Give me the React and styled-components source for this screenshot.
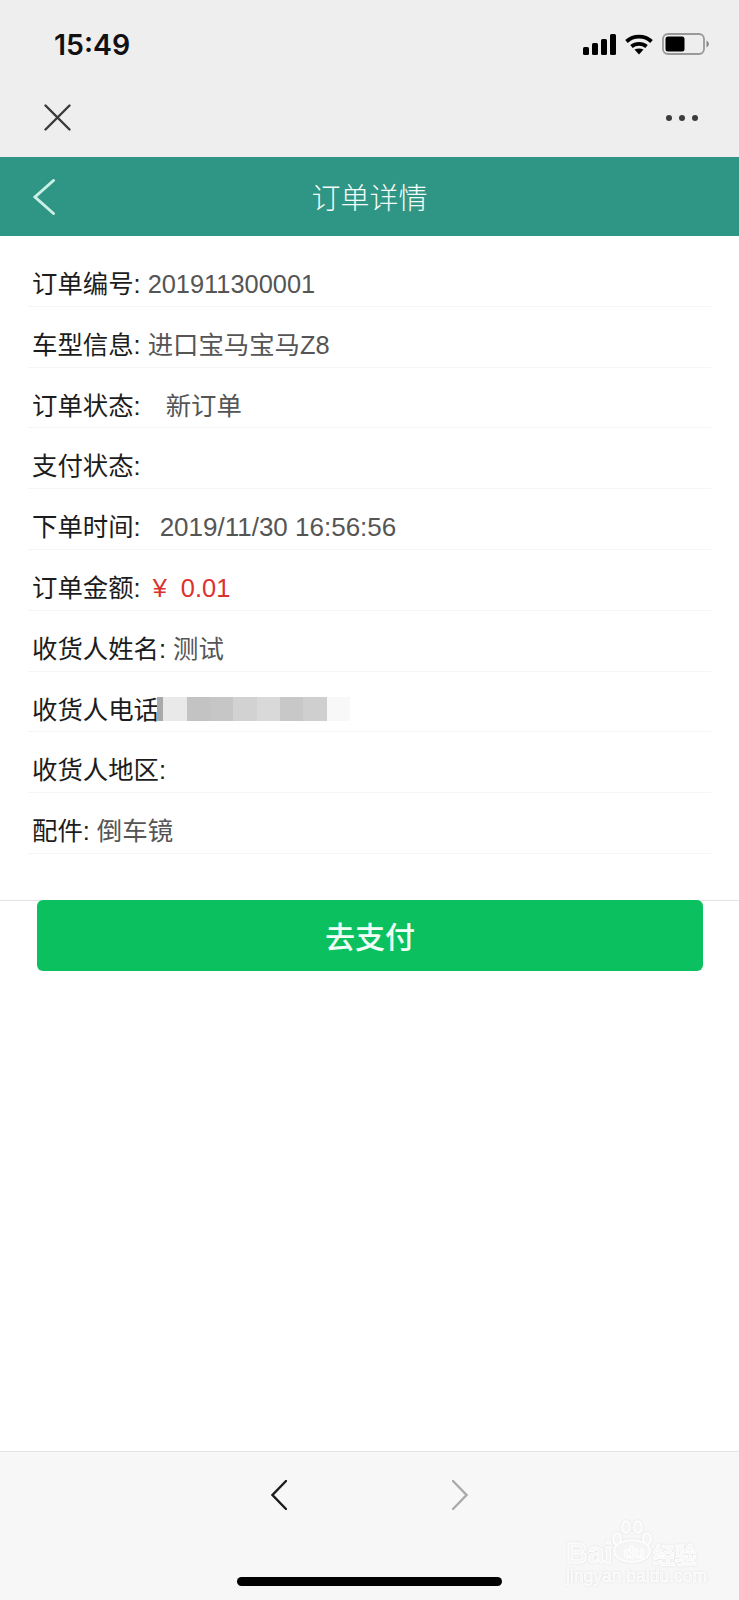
import styled, { createGlobalStyle } from "styled-components";

const orderRows = [
  { label: "订单编号:", value: "201911300001" },
  { label: "车型信息:", value: "进口宝马宝马Z8" },
  { label: "订单状态:", value: "新订单", gap: 25 },
  { label: "支付状态:" },
  { label: "下单时间:", value: "2019/11/30 16:56:56", gap: 19, wide: true },
  { label: "订单金额:", value: "¥  0.01", red: true, gap: 12 },
  { label: "收货人姓名:", value: "测试" },
  { label: "收货人电话", censored: true },
  { label: "收货人地区:" },
  { label: "配件:", value: "倒车镜" },
];

const censorBlocks = [
  { width: 6, shade: "#a9a9a9" },
  { width: 24, shade: "#e9e9e9" },
  { width: 23, shade: "#c3c3c3" },
  { width: 23, shade: "#c6c6c6" },
  { width: 24, shade: "#d2d2d2" },
  { width: 23, shade: "#d9d9d9" },
  { width: 23, shade: "#c8c8c8" },
  { width: 24, shade: "#cfcfcf" },
  { width: 23, shade: "#f8f8f8" },
];

const GlobalStyle = createGlobalStyle`
  html, body {
    margin: 0;
    padding: 0;
    background: #fff;
    font-family: "Liberation Sans", "Noto Sans CJK SC", sans-serif;
  }
`;

const Page = styled.div`
  display: flex;
  flex-direction: column;
  min-height: 1600px;
  position: relative;
  overflow: hidden;
`;

const TopArea = styled.div`
  background: #eeeeee;
  height: 157px;
  flex-shrink: 0;
`;

const StatusBar = styled.div`
  height: 88px;
  display: flex;
  align-items: center;
  justify-content: space-between;
  padding: 0 30px 0 54px;
`;

const Clock = styled.span`
  font-family: Inter, "Liberation Sans", sans-serif;
  font-size: 28.5px;
  font-weight: 600;
  color: #111;
`;

const StatusIcons = styled.div`
  display: flex;
  align-items: center;
  gap: 9px;
`;

const NavRow = styled.div`
  height: 59px;
  display: flex;
  align-items: center;
  justify-content: space-between;
  padding: 0 41px 0 44px;
`;

const Header = styled.header`
  height: 79px;
  flex-shrink: 0;
  box-sizing: border-box;
  padding-bottom: 2px;
  background: #2f9584;
  display: flex;
  align-items: center;
  justify-content: center;
  position: relative;
`;

const HeaderBack = styled.svg`
  position: absolute;
  left: 33px;
  top: 22px;
`;

const Title = styled.h1`
  margin: 0;
  font-size: 29px;
  font-weight: 300;
  color: #f4fbf8;
`;

const OrderSection = styled.section`
  padding: 10px 28px 46px;
  border-bottom: 1px solid #e2e2e2;
`;

const Row = styled.div`
  height: 60.8px;
  box-sizing: border-box;
  display: flex;
  align-items: baseline;
  padding: 24px 0 0 4px;
  border-bottom: 1px solid #f5f5f5;
  font-size: 25.4px;
  line-height: 28px;
  white-space: pre;
`;

const Label = styled.span`
  color: #1c1c1c;
`;

const Value = styled.span`
  color: ${(p) => (p.$red ? "#da3230" : "#555")};
  font-size: ${(p) => (p.$wide ? "26px" : "25.4px")};
  margin-left: ${(p) => p.$gap}px;
`;

const Censor = styled.div`
  display: flex;
  height: 24px;
  align-self: flex-start;
  margin: 1px 0 0 -2px;
`;

const CensorBlock = styled.div`
  width: ${(p) => p.$width}px;
  background: ${(p) => p.$shade};
`;

const PayButton = styled.button`
  display: block;
  box-sizing: border-box;
  margin: -1px 36px 0 37px;
  height: 71px;
  border: none;
  border-radius: 6px;
  background: #0bc15f;
  color: #f2fff7;
  font-family: inherit;
  font-size: 30px;
  font-weight: 500;
  position: relative;
`;

const Spacer = styled.div`
  flex: 1;
`;

const BottomBar = styled.footer`
  height: 149px;
  flex-shrink: 0;
  box-sizing: border-box;
  background: #f7f7f7;
  border-top: 1px solid #e4e4e4;
  display: flex;
  flex-direction: column;
  align-items: center;
  padding-top: 28px;
`;

const Pager = styled.div`
  display: flex;
  gap: 165px;
`;

const HomeBar = styled.div`
  width: 265px;
  height: 9px;
  border-radius: 5px;
  background: #000;
  margin-top: 67px;
`;

const Watermark = styled.div`
  position: absolute;
  left: 566px;
  top: 1520px;
  width: 134px;
  display: flex;
  flex-direction: column;
  color: #f5f5f5;
  -webkit-text-stroke: 1px #fff;
  filter: drop-shadow(0 0 1px #e0e0e0);
`;

const MarkPaw = styled.svg`
  display: block;
  margin-left: 46px;
  height: 44px;
  margin-bottom: -23px;
`;

const MarkBrand = styled.div`
  display: flex;
  align-items: center;
  height: 23px;
`;

const MarkBai = styled.span`
  font-size: 30px;
  font-weight: 700;
  width: 50px;
`;

const MarkDu = styled.span`
  font-size: 17px;
  font-weight: 700;
  width: 36px;
  text-align: center;
`;

const MarkName = styled.span`
  font-size: 22px;
  font-weight: 700;
  margin-left: 1px;
`;

const MarkUrl = styled.span`
  margin-top: 3px;
  font-size: 17.5px;
  line-height: 18px;
  white-space: nowrap;
  -webkit-text-stroke: 0.6px #fff;
`;

const SignalIcon = () => (
  <svg width="33" height="21" viewBox="0 0 33 21" fill="#000">
    <rect x="0" y="13" width="6" height="8" rx="1.5" />
    <rect x="9" y="9" width="6" height="12" rx="1.5" />
    <rect x="18" y="5" width="6" height="16" rx="1.5" />
    <rect x="27" y="0" width="6" height="21" rx="1.5" />
  </svg>
);

const WifiIcon = () => (
  <svg width="28" height="21" viewBox="0 0 28 21" fill="none" stroke="#000" strokeWidth="3.8">
    <path d="M1.5 7.5 C8.5 1 19.5 1 26.5 7.5" />
    <path d="M6.5 12.5 C10.5 9 17.5 9 21.5 12.5" />
    <path d="M9.5 15.6 L14 20.5 L18.5 15.6 C15.6 14 12.4 14 9.5 15.6 Z" fill="#000" stroke="none" />
  </svg>
);

const BatteryIcon = () => (
  <svg width="47" height="22" viewBox="0 0 47 22">
    <rect x="1" y="1" width="41" height="20" rx="5" fill="none" stroke="#999" strokeWidth="1.8" />
    <rect x="3.5" y="3.5" width="19" height="15" rx="2.5" fill="#000" />
    <path d="M44.5 7.5 C46 8.5 47 10 47 11 C47 12 46 13.5 44.5 14.5 Z" fill="#888" />
  </svg>
);

const CloseIcon = () => (
  <svg width="27" height="27" viewBox="0 0 27 27" stroke="#3a3a3a" strokeWidth="2.4" strokeLinecap="round">
    <path d="M1.5 1.5 L25.5 25.5 M25.5 1.5 L1.5 25.5" />
  </svg>
);

const MoreIcon = () => (
  <svg width="32" height="6" viewBox="0 0 32 6" fill="#3c3c3c">
    <circle cx="3" cy="3" r="3" />
    <circle cx="16" cy="3" r="3" />
    <circle cx="29" cy="3" r="3" />
  </svg>
);

const Chevron = ({ left, color }) => (
  <svg width="16" height="30" viewBox="0 0 16 30" fill="none" stroke={color} strokeWidth="2.4" strokeLinecap="round">
    <path d={left ? "M15 1 L1.5 15 L15 29" : "M1 1 L14.5 15 L1 29"} />
  </svg>
);

export default function App() {
  return (
    <Page>
      <GlobalStyle />
      <TopArea>
        <StatusBar>
          <Clock>15:49</Clock>
          <StatusIcons>
            <SignalIcon />
            <WifiIcon />
            <BatteryIcon />
          </StatusIcons>
        </StatusBar>
        <NavRow>
          <CloseIcon />
          <MoreIcon />
        </NavRow>
      </TopArea>

      <Header>
        <HeaderBack width="22" height="36" viewBox="0 0 22 36" fill="none" stroke="#c9f0e4" strokeWidth="3" strokeLinecap="round">
          <path d="M20.5 1.5 L2 18 L20.5 34.5" />
        </HeaderBack>
        <Title>订单详情</Title>
      </Header>

      <OrderSection>
        {orderRows.map((row) => (
          <Row key={row.label}>
            <Label>{row.label}</Label>
            {row.value && (
              <Value $red={row.red} $wide={row.wide} $gap={row.gap ?? 7}>
                {row.value}
              </Value>
            )}
            {row.censored && (
              <Censor>
                {censorBlocks.map((block, i) => (
                  <CensorBlock key={i} $width={block.width} $shade={block.shade} />
                ))}
              </Censor>
            )}
          </Row>
        ))}
      </OrderSection>

      <PayButton>去支付</PayButton>

      <Spacer />

      <BottomBar>
        <Pager>
          <Chevron left color="#1d1d1d" />
          <Chevron color="#ababab" />
        </Pager>
        <HomeBar />
      </BottomBar>

      <Watermark>
        <MarkPaw width="40" height="44" viewBox="0 0 40 44" fill="#f5f5f5" stroke="#fff" strokeWidth="1.5">
          <ellipse cx="5" cy="19" rx="4" ry="6" />
          <ellipse cx="14" cy="7" rx="4" ry="6" />
          <ellipse cx="26" cy="7" rx="4" ry="6" />
          <ellipse cx="35" cy="19" rx="4" ry="6" />
          <ellipse cx="20" cy="31" rx="18" ry="11" />
        </MarkPaw>
        <MarkBrand>
          <MarkBai>Bai</MarkBai>
          <MarkDu>du</MarkDu>
          <MarkName>经验</MarkName>
        </MarkBrand>
        <MarkUrl>jingyan.baidu.com</MarkUrl>
      </Watermark>
    </Page>
  );
}
